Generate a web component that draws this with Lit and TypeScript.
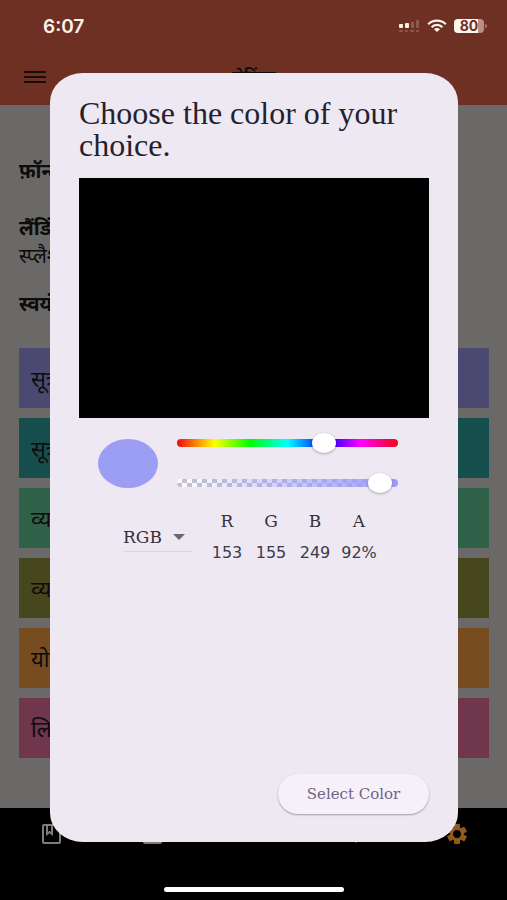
import { LitElement, html, css, svg } from "lit";
import { customElement, state } from "lit/decorators.js";
import { classMap } from "lit/directives/class-map.js";

const ROWS = [
  { label: "सूत्र", tone: "indigo" },
  { label: "सूत्र", tone: "teal" },
  { label: "व्याख्या", tone: "green" },
  { label: "व्याख्या", tone: "olive" },
  { label: "योग", tone: "orange" },
  { label: "लिखित", tone: "rose" },
];

@customElement("status-bar")
class StatusBar extends LitElement {
  static styles = css`
    :host {
      display: flex;
      justify-content: space-between;
      align-items: center;
      height: 52px;
      padding: 0 20px 0 43px;
      color: #fdf3ec;
      font-family: Inter, "Liberation Sans", sans-serif;
    }
    .time {
      font-size: 19px;
      font-weight: 600;
    }
    .icons {
      display: flex;
      align-items: center;
      gap: 7px;
    }
    .battery {
      display: flex;
      align-items: center;
      gap: 1px;
    }
    .level {
      width: 30px;
      height: 14px;
      border-radius: 4px;
      background: linear-gradient(to right, #fdf6f2 80%, #b98f85 80%);
      color: #6e3022;
      font-size: 14px;
      line-height: 14px;
      font-weight: 700;
      text-align: center;
    }
    .cap {
      width: 2px;
      height: 4px;
      border-radius: 0 2px 2px 0;
      background: #a0776c;
    }
    svg {
      display: block;
    }
  `;
  render() {
    return html`
      <span class="time">6:07</span>
      <span class="icons">
        <svg width="22" height="14" viewBox="0 0 22 14">
          <g fill="#fdf3dd">
            <rect x="1" y="5" width="4" height="4" rx="1" />
            <rect x="7" y="4" width="4" height="5" rx="1" />
          </g>
          <g fill="#8f5a4c">
            <rect x="13" y="3" width="3" height="6" rx="1" />
            <rect x="18" y="1" width="3" height="8" rx="1" />
            <rect x="1" y="11" width="4" height="2" rx="1" />
            <rect x="7" y="11" width="3" height="2" rx="1" />
            <rect x="12" y="11" width="4" height="2" rx="1" />
            <rect x="18" y="11" width="3" height="2" rx="1" />
          </g>
        </svg>
        <svg width="20" height="14" viewBox="0 0 20 14" fill="none" stroke="#fdf3ec" stroke-width="2.2">
          <path d="M1.2 5.2C6 0.4 14 0.4 18.8 5.2" />
          <path d="M4.6 8.2C7.6 5.2 12.4 5.2 15.4 8.2" />
          <path d="M10 13L7 10.2C8.6 8.7 11.4 8.7 13 10.2Z" fill="#fdf3ec" stroke="none" />
        </svg>
        <span class="battery"><span class="level">80</span><span class="cap"></span></span>
      </span>
    `;
  }
}

@customElement("color-dialog")
class ColorDialog extends LitElement {
  @state() hue = 246;
  @state() alpha = 97;

  static styles = css`
    :host {
      display: flex;
      flex-direction: column;
      box-sizing: border-box;
      padding: 24px 29px 28px;
      border-radius: 33px / 29px;
      background: #eee8f3;
      color: #25212c;
      font-family: "Liberation Serif", serif;
    }
    h2 {
      margin: 0 0 17px;
      font-size: 32px;
      line-height: 32px;
      font-weight: 400;
    }
    .shade {
      height: 240px;
      background: #000;
    }
    .controls {
      display: flex;
      align-items: center;
      gap: 19px;
      padding: 15px 31px 0 19px;
    }
    .swatch {
      flex: none;
      width: 60px;
      height: 49px;
      border-radius: 50%;
      background: #9c9ef3;
    }
    .sliders {
      flex: 1;
      display: flex;
      flex-direction: column;
      gap: 20px;
    }
    input[type="range"] {
      appearance: none;
      display: block;
      width: 100%;
      height: 20px;
      margin: 0;
      background: none;
    }
    input[type="range"]::-webkit-slider-runnable-track {
      height: 8px;
      border-radius: 4px;
    }
    .hue::-webkit-slider-runnable-track {
      background: linear-gradient(to right, #f00712, #ff0 17%, #0f0 33%, #0ff 50%, #00f 67%, #f0f 83%, #f00712);
    }
    .alpha::-webkit-slider-runnable-track {
      background:
        linear-gradient(to right, #999bf900, #999bf9),
        repeating-conic-gradient(#c6c3ca 0 25%, #fff 0 50%) 0 0 / 10px 8px;
    }
    input[type="range"]::-webkit-slider-thumb {
      appearance: none;
      width: 24px;
      height: 20px;
      margin-top: -6px;
      border: 0;
      border-radius: 50%;
      background: #fff;
      box-shadow: 0 1px 3px #0000004d;
    }
    .values {
      display: flex;
      justify-content: center;
      align-items: center;
      gap: 13px;
      margin-top: 16px;
      padding-right: 4px;
    }
    .mode {
      display: flex;
      align-items: center;
      width: 69px;
      height: 29px;
      border-bottom: 1px solid #dcd6e1;
    }
    select {
      appearance: none;
      flex: 1;
      min-width: 0;
      padding: 0;
      border: 0;
      background: none;
      color: #35303b;
      font: 17px/24px "DejaVu Serif", serif;
    }
    .arrow {
      flex: none;
      margin-right: 7px;
    }
    .channels {
      display: flex;
    }
    .channel {
      display: flex;
      flex-direction: column;
      align-items: center;
      gap: 8px;
      width: 44px;
      color: #35303b;
      font: 17px/24px "DejaVu Serif", serif;
    }
    .channel input {
      box-sizing: border-box;
      width: 100%;
      height: 24px;
      padding: 0;
      border: 0;
      background: none;
      color: #3f3a45;
      font: 16px/24px "DejaVu Sans", sans-serif;
      text-align: center;
    }
    .select {
      align-self: flex-end;
      margin-top: auto;
      width: 151px;
      height: 40px;
      border: 0;
      border-radius: 20px;
      background: #f6f1f9;
      box-shadow: 0 1px 2px #00000055;
      color: #6f6485;
      font: 15px/20px "DejaVu Serif", serif;
    }
  `;

  private channel(name: string, value: string) {
    return html`<label class="channel">${name}<input type="text" .value=${value} /></label>`;
  }

  render() {
    return html`
      <h2 id="title">Choose the color of your choice.</h2>
      <div class="shade"></div>
      <div class="controls">
        <div class="swatch"></div>
        <div class="sliders">
          <input class="hue" type="range" min="0" max="360" aria-label="Hue" .value=${String(this.hue)}
            @input=${(e: Event) => (this.hue = Number((e.target as HTMLInputElement).value))} />
          <input class="alpha" type="range" min="0" max="100" aria-label="Alpha" .value=${String(this.alpha)}
            @input=${(e: Event) => (this.alpha = Number((e.target as HTMLInputElement).value))} />
        </div>
      </div>
      <div class="values">
        <div class="mode">
          <select aria-label="Color model">
            <option>RGB</option>
            <option>HSV</option>
            <option>HSL</option>
          </select>
          <svg class="arrow" width="12" height="6" viewBox="0 0 12 6"><path d="M0 0H12L6 6Z" fill="#6b6671" /></svg>
        </div>
        <div class="channels">
          ${this.channel("R", "153")}${this.channel("G", "155")}${this.channel("B", "249")}${this.channel("A", "92%")}
        </div>
      </div>
      <button class="select" type="button">Select Color</button>
    `;
  }
}

const gearTeeth = [0, 60, 120, 180, 240, 300].map(
  (a) => svg`<rect x="9" y="2" width="6" height="6" rx="1" transform="rotate(${a} 12 12)" />`
);

@customElement("app-root")
class AppRoot extends LitElement {
  static styles = css`
    :host {
      position: relative;
      display: flex;
      flex-direction: column;
      min-height: 100vh;
      overflow: hidden;
      background: #6b6868;
      color: #0d0c0d;
      font-family: "Noto Sans", "Noto Sans Devanagari", sans-serif;
    }
    header {
      background: #6e3022;
      height: 105px;
    }
    .appbar {
      display: grid;
      grid-template-columns: 1fr auto 1fr;
      align-items: center;
      height: 50px;
      padding: 0 24px;
    }
    .menu {
      justify-self: start;
      padding: 0;
      border: 0;
      background: none;
    }
    svg {
      display: block;
    }
    h1 {
      margin: 0;
      font-size: 17px;
      line-height: 24px;
      font-weight: 600;
    }
    main {
      flex: 1;
      padding: 52px 18px 48px 19px;
    }
    h3,
    p {
      margin: 0;
      font-size: 20px;
      line-height: 28px;
    }
    p + h3 {
      margin-top: 20px;
    }
    h3 + h3 {
      margin-top: 29px;
    }
    ul {
      display: grid;
      gap: 10px;
      margin: 30px 0 0;
      padding: 0;
      list-style: none;
    }
    li {
      display: flex;
      align-items: center;
      height: 60px;
      padding-left: 12px;
      font-size: 22px;
      line-height: 28px;
    }
    .indigo { background: #4b4971; }
    .teal { background: #164e4e; }
    .green { background: #2f6248; }
    .olive { background: #46471d; }
    .orange { background: #764c20; }
    .rose { background: #70364c; }
    nav {
      display: flex;
      justify-content: space-between;
      height: 92px;
      box-sizing: border-box;
      padding: 14px 38px 0 39px;
      background: #000;
    }
    nav a {
      width: 24px;
      height: 24px;
      color: #7e7b7b;
    }
    nav a.active {
      color: #8f5a1a;
    }
    .overlay {
      position: absolute;
      inset: 0;
      display: grid;
      padding: 73px 49px 58px 50px;
    }
    .home {
      position: absolute;
      left: 50%;
      bottom: 8px;
      width: 180px;
      height: 5px;
      margin-left: -90px;
      border-radius: 3px;
      background: #fff;
    }
  `;

  render() {
    return html`
      <header>
        <status-bar></status-bar>
        <div class="appbar">
          <button class="menu" type="button" aria-label="Menu">
            <svg width="22" height="14" viewBox="0 0 22 14" fill="#1d0b07">
              <rect y="1" width="22" height="2" /><rect y="6" width="22" height="2" /><rect y="11" width="22" height="2" />
            </svg>
          </button>
          <h1>सेटिंग्स</h1>
        </div>
      </header>
      <main>
        <h3>फ़ॉन्ट</h3>
        <h3>लैंडिंग</h3>
        <p>स्प्लैश</p>
        <h3>स्वयं</h3>
        <ul>
          ${ROWS.map((r) => html`<li class=${classMap({ [r.tone]: true })}>${r.label}</li>`)}
        </ul>
      </main>
      <nav>
        <a href="#book" aria-label="Book">
          <svg width="24" height="24" viewBox="0 0 24 24" fill="none" stroke="currentColor" stroke-width="2">
            <rect x="4" y="3" width="17" height="18" rx="1" /><path d="M8 3V12L10.500 10L13 12V3" />
          </svg>
        </a>
        <a href="#library" aria-label="Library">
          <svg width="24" height="24" viewBox="0 0 24 24" fill="none" stroke="currentColor" stroke-width="2">
            <rect x="3" y="4" width="17" height="17" rx="1" />
          </svg>
        </a>
        <a href="#search" aria-label="Search">
          <svg width="24" height="24" viewBox="0 0 24 24" fill="none" stroke="currentColor" stroke-width="2">
            <circle cx="10" cy="9" r="6" /><path d="M14 13L19 18" />
          </svg>
        </a>
        <a href="#saved" aria-label="Saved">
          <svg width="24" height="24" viewBox="0 0 24 24" fill="currentColor"><path d="M12 21L4 12A5 5 0 0 1 12 6A5 5 0 0 1 20 12Z" /></svg>
        </a>
        <a class="active" href="#settings" aria-label="Settings">
          <svg width="24" height="24" viewBox="0 0 24 24" fill="currentColor">
            ${gearTeeth}<path fill-rule="evenodd" d="M12 5A7 7 0 1 0 12 19A7 7 0 1 0 12 5ZM12 8A4 4 0 1 1 12 16A4 4 0 1 1 12 8Z" />
          </svg>
        </a>
      </nav>
      <div class="overlay">
        <color-dialog role="dialog" aria-modal="true" aria-label="Choose the color of your choice."></color-dialog>
      </div>
      <div class="home"></div>
    `;
  }
}
